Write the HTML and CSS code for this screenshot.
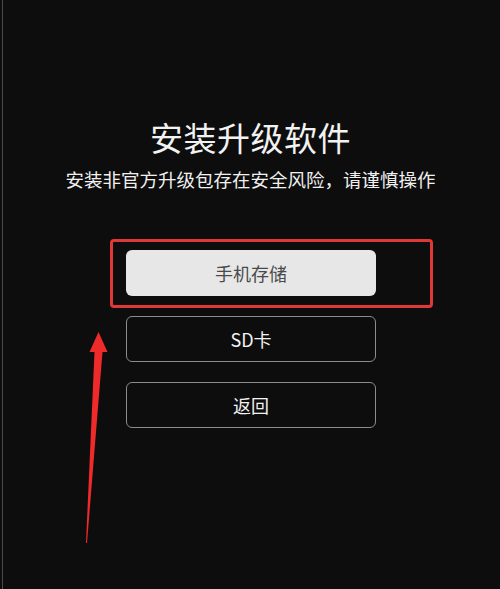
FILE: index.html
```html
<!DOCTYPE html>
<html lang="zh">
<head>
<meta charset="utf-8">
<link rel="stylesheet" href="styles.css">
</head>
<body>
<div class="screen">
  <div class="content">
    <h1 class="title">安装升级软件</h1>
    <p class="subtitle">安装非官方升级包存在安全风险，请谨慎操作</p>
    <div class="buttons">
      <button class="btn btn-primary">手机存储</button>
      <button class="btn btn-outline">SD卡</button>
      <button class="btn btn-outline">返回</button>
    </div>
  </div>
  <div class="highlight"></div>
  <svg class="arrow" width="40" height="230" viewBox="0 0 40 230">
    <polygon points="26.5,2 35.5,22 30.5,22 15,213 14,213 22.5,22 17.5,22" fill="#ee2a2a"/>
  </svg>
</div>
</body>
</html>
```
FILE: styles.css
```css
html, body {
  margin: 0;
  padding: 0;
  background: #0d0d0d;
}
.screen {
  position: relative;
  width: 500px;
  height: 589px;
  background: #0d0d0d;
  border-left: 1px solid #0d0d0d;
  box-sizing: border-box;
  overflow: hidden;
  font-family: "Noto Sans CJK SC", "Noto Sans", sans-serif;
}
.screen::before {
  content: "";
  position: absolute;
  left: 1px;
  top: 0;
  bottom: 0;
  width: 1px;
  background: #4a4a4a;
}
.content {
  display: flex;
  flex-direction: column;
  align-items: center;
  padding-top: 116px;
}
.title {
  margin: 0;
  font-size: 33px;
  line-height: 42px;
  font-weight: 400;
  color: #f2f2f2;
  letter-spacing: 0.5px;
}
.subtitle {
  margin: 9px 0 0;
  font-size: 18.5px;
  line-height: 24px;
  color: #f0f0f0;
  font-weight: 400;
}
.buttons {
  display: flex;
  flex-direction: column;
  gap: 20px;
  margin-top: 59px;
  margin-left: 1px;
}
.btn {
  width: 250px;
  height: 46px;
  border-radius: 6px;
  font-family: "Noto Sans CJK SC", "Noto Sans", sans-serif;
  font-size: 18px;
  padding: 0;
  box-sizing: border-box;
}
.btn-primary {
  background: #e7e7e7;
  border: none;
  color: #4a4a4a;
}
.btn-outline {
  background: transparent;
  border: 1.5px solid #8c8c8c;
  color: #f2f2f2;
}
.highlight {
  position: absolute;
  left: 109px;
  top: 239px;
  width: 323px;
  height: 69px;
  border: 3px solid #e03838;
  border-radius: 4px;
  box-sizing: border-box;
}
.arrow {
  position: absolute;
  left: 71px;
  top: 330px;
}
```
